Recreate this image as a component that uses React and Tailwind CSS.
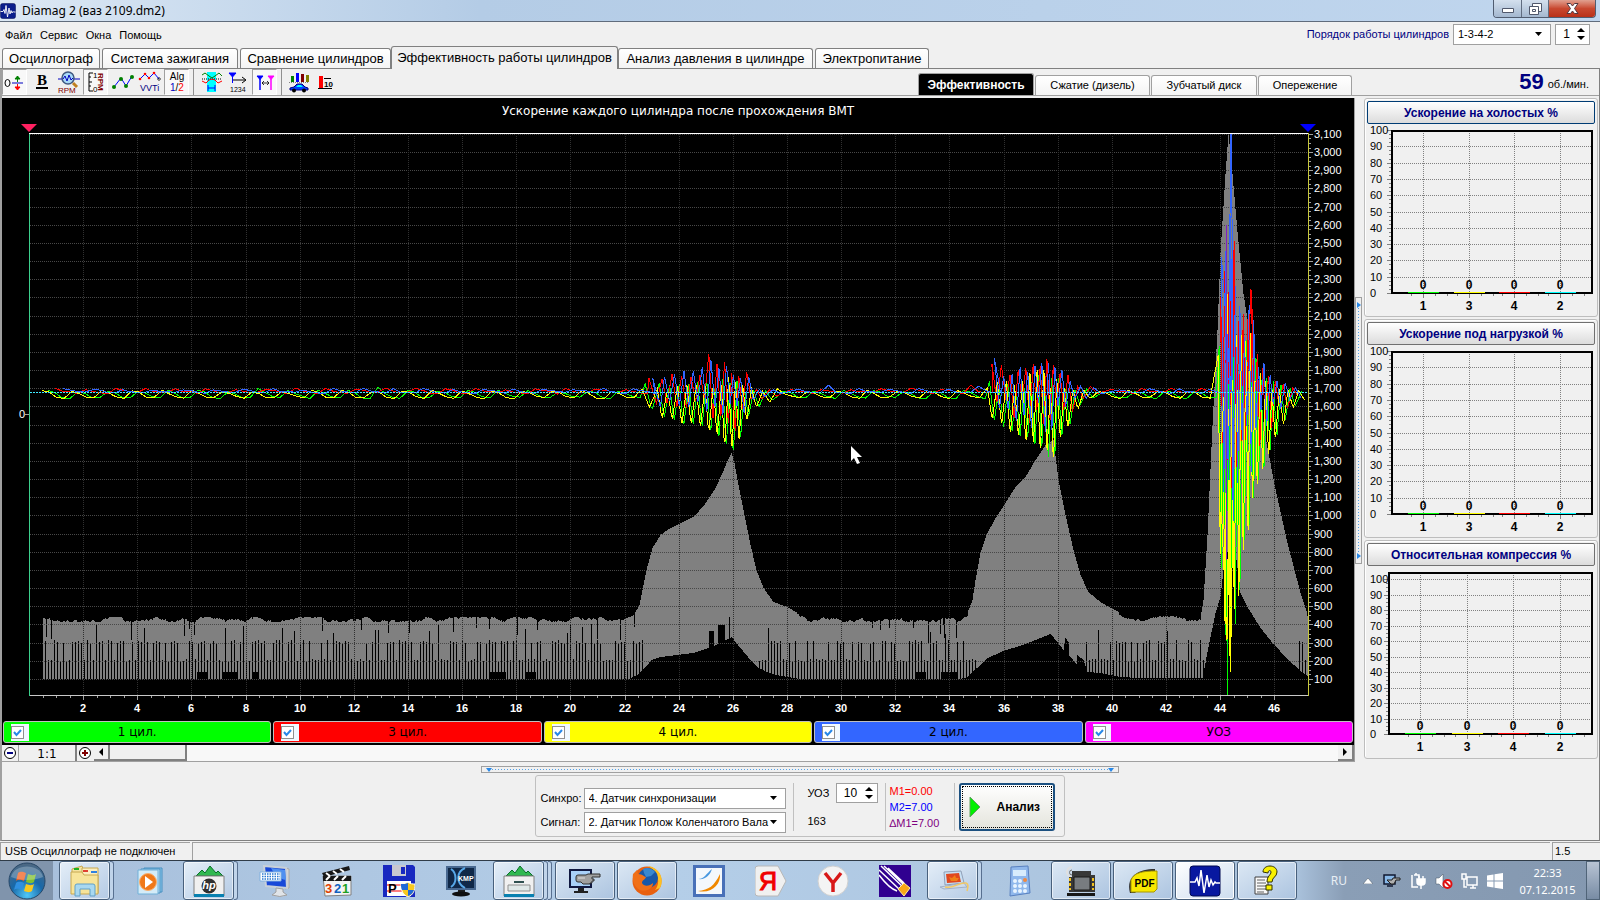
import React from "react";

/* ---------- trace data ---------- */

function makeRandom(seed) {
  let s = seed;
  return () => {
    s = (s * 1664525 + 1013904223) % 4294967296;
    return s / 4294967296;
  };
}

function lerp(points, x) {
  if (x <= points[0][0]) return points[0][1];
  for (let i = 1; i < points.length; i++) {
    const [x1, y1] = points[i];
    if (x <= x1) {
      const [x0, y0] = points[i - 1];
      return y0 + ((y1 - y0) * (x - x0)) / (x1 - x0);
    }
  }
  return points[points.length - 1][1];
}

const RPM_TOP = [
  [43, 619], [628, 619], [635, 612], [639, 605], [642, 590], [646, 570], [652, 548], [660, 535], [667, 530],
  [680, 523], [693, 517], [703, 506], [714, 490], [722, 473], [727, 461], [731, 453], [734, 463], [738, 485],
  [744, 515], [750, 545], [756, 570], [763, 588], [773, 602], [787, 607], [800, 615], [811, 619], [958, 619],
  [967, 613], [972, 600], [975, 580], [980, 553], [986, 535], [995, 518], [1005, 503], [1015, 487], [1025, 477],
  [1035, 460], [1045, 445], [1053, 440], [1058, 480], [1065, 515], [1073, 550], [1080, 575], [1088, 592],
  [1100, 602], [1112, 609], [1125, 615], [1136, 618], [1200, 618], [1203, 600], [1207, 535], [1212, 425],
  [1217, 330], [1220, 253], [1225, 174], [1228, 134], [1232, 174], [1237, 232], [1243, 294], [1252, 352],
  [1267, 448], [1275, 489], [1287, 543], [1300, 593], [1308, 617],
];

const RPM_BOTTOM = [
  [43, 679], [628, 679], [637, 675], [645, 667], [651, 660], [660, 657], [693, 653], [708, 648], [720, 643],
  [731, 637], [740, 648], [750, 660], [757, 667], [766, 672], [776, 675], [800, 679], [960, 679], [967, 677],
  [973, 671], [980, 665], [987, 658], [1003, 651], [1025, 644], [1040, 638], [1050, 634], [1057, 642],
  [1063, 650], [1065, 638], [1068, 642], [1069, 656], [1076, 664], [1077, 655], [1083, 660], [1087, 672],
  [1100, 673], [1120, 677], [1140, 678], [1202, 678], [1208, 647], [1215, 613], [1220, 597], [1224, 560],
  [1233, 535], [1240, 593], [1247, 607], [1260, 628], [1273, 644], [1287, 659], [1300, 671], [1307, 676],
];

const DARK_BLOCKS = [
  [197, 207, 672], [222, 237, 672], [252, 257, 672], [490, 505, 672], [525, 535, 672], [709, 713, 631],
  [718, 724, 625], [729, 729, 617], [916, 925, 672], [941, 956, 672],
];

function rpmPath() {
  const rnd = makeRandom(77);
  let d = "";
  let wander = 0;
  let slit = 660;
  for (let x = 43; x <= 1307; x++) {
    let top = lerp(RPM_TOP, x);
    let bottom = lerp(RPM_BOTTOM, x);
    const idle = top > 612;
    const nearIdle = bottom > 668;
    if (idle) {
      wander = Math.max(-2, Math.min(3, wander + (rnd() - 0.5) * 2.8));
      top += wander;
      if (rnd() < 0.025) top += 6 + rnd() * 16;
    }
    if (nearIdle && x % 3 === 0) {
      const r = rnd();
      if (r < 0.5) slit = 659 + rnd() * 2;
      else if (r < 0.96) slit = 640 + rnd() * 3;
      else slit = 624 + rnd() * 10;
      bottom = slit;
    }
    for (const [a, b, y] of DARK_BLOCKS) {
      if (x >= a && x <= b) bottom = Math.min(bottom, y);
    }
    d += `M${x}.5 ${Math.round(top)}V${Math.round(bottom)}`;
  }
  return d;
}

const SWING_UP = [
  [45, 388], [625, 388], [636, 382], [645, 372], [675, 372], [700, 370], [709, 346], [714, 366], [721, 360],
  [727, 356], [737, 372], [748, 370], [755, 389], [965, 388], [980, 376], [997, 354], [1004, 372], [1025, 365],
  [1034, 352], [1045, 354], [1055, 365], [1064, 364], [1072, 386], [1190, 388], [1200, 378], [1205, 364],
  [1210, 338], [1216, 280], [1222, 240], [1226, 220], [1229, 190], [1231, 134], [1233, 200], [1237, 280],
  [1245, 310], [1251, 284], [1258, 355], [1264, 362], [1275, 376], [1285, 382], [1300, 390],
];

const SWING_DOWN = [
  [45, 398], [630, 398], [650, 407], [660, 418], [673, 420], [685, 425], [697, 425], [707, 430], [719, 440],
  [728, 448], [735, 455], [744, 430], [752, 408], [762, 407], [775, 399], [965, 398], [975, 402], [985, 413],
  [996, 422], [1008, 430], [1018, 437], [1028, 441], [1037, 447], [1045, 453], [1053, 462], [1060, 441],
  [1064, 438], [1073, 420], [1080, 405], [1092, 398], [1200, 399], [1208, 408], [1211, 427], [1218, 500],
  [1223, 615], [1227, 657], [1230, 672], [1234, 632], [1240, 593], [1244, 558], [1250, 520], [1257, 490],
  [1265, 468], [1272, 447], [1282, 428], [1290, 410], [1300, 402],
];

function cylinderPath(offset, seed, downward) {
  const rnd = makeRandom(seed);
  const pts = [];
  const add = (px, y) => {
    if (px < 1305) pts.push(`${px.toFixed(1)} ${y.toFixed(1)}`);
  };
  let x = 42;
  while (x < 1304) {
    const rpm = 100 + (679 - lerp(RPM_TOP, x)) / 0.1817;
    const quiet = lerp(SWING_DOWN, x) - lerp(SWING_UP, x) < 13;
    if (quiet) {
      const period = 30;
      const high = downward ? 390 : 388;
      const low = downward ? 398 : 393;
      const a = x + offset * period;
      add(a, high + rnd() * 2 - (rnd() < 0.05 ? 3 : 0));
      add(a + 7, high + 2 + rnd() * 2);
      add(a + 14, low - rnd() * 2);
      add(a + 22, low - 1 + rnd() * 2);
      x += period;
    } else {
      const period = Math.max(4.6, 9000 / rpm);
      const a = x + offset * period;
      const b = a + period * 0.5;
      const up = 392 - lerp(SWING_UP, a);
      const down = lerp(SWING_DOWN, b) - 392;
      if (downward) {
        add(a, 392 - up * (0.1 + rnd() * 0.5));
        add(b - period * 0.12, 392 + down * (0.75 + rnd() * 0.15));
        add(b, 392 + down * (0.9 + rnd() * 0.1));
      } else {
        add(a, 392 - up * (0.65 + rnd() * 0.35));
        add(b, 392 + Math.min(down, 200) * (0.15 + rnd() * 0.55));
      }
      x += period;
    }
  }
  return "M" + pts.join("L");
}

const RPM = rpmPath();
const TRACES = [
  { color: "#00ff00", d: cylinderPath(0.2, 11, true) },
  { color: "#ff0000", d: cylinderPath(0.45, 23, false) },
  { color: "#ffff00", d: cylinderPath(0, 47, true) },
  { color: "#3366ff", d: cylinderPath(0.7, 31, false) },
];

/* ---------- main chart ---------- */

const xAt = (v) => Math.round(29 + v * 27.07);
const yAt = (v) => Math.round(679 - ((v - 100) / 100) * 18.17);

function MainChart() {
  const xs = Array.from({ length: 23 }, (_, i) => (i + 1) * 2);
  const ys = Array.from({ length: 31 }, (_, i) => (i + 1) * 100);
  const minorX = Array.from({ length: 92 }, (_, i) => 0.5 + i * 0.5);
  const minorY = Array.from({ length: 122 }, (_, i) => 75 + i * 25);
  return (
    <svg viewBox="2 98 1352 623" className="block h-auto w-full bg-black" role="img" aria-label="Ускорение каждого цилиндра после прохождения ВМТ">
      <text x="678" y="115" fill="#fff" fontSize="12" textAnchor="middle" className="font-['DejaVu_Sans',sans-serif]">
        Ускорение каждого цилиндра после прохождения ВМТ
      </text>
      <g shapeRendering="crispEdges">
        <path d={RPM} stroke="#808080" strokeWidth="1" />
        <g stroke="#484848" strokeDasharray="1 1">
          {ys.map((v) => <path key={v} d={`M30 ${yAt(v)}.5H1308`} />)}
          {xs.map((v) => <path key={v} d={`M${xAt(v)}.5 134V695`} stroke="#303030" />)}
        </g>
        <path d="M29 695.5H1309" stroke="#c8c8c8" />
        <g stroke="#a0a0a0">
          {minorX.map((v) => <path key={v} d={`M${xAt(v)}.5 696v2`} />)}
          {xs.map((v) => <path key={v} d={`M${xAt(v)}.5 696v4`} />)}
          {minorY.map((v) => <path key={v} d={`M1309 ${yAt(v)}.5h2`} />)}
          {ys.map((v) => <path key={v} d={`M1309 ${yAt(v)}.5h4`} />)}
          <path d="M25 414.5h4" />
        </g>
        <path d="M1227.5 600V695" stroke="#00ff00" />
      </g>
      <g fill="none" strokeWidth="1" shapeRendering="crispEdges">
        {TRACES.map((t) => <path key={t.color} d={t.d} stroke={t.color} />)}
        <path d="M1229 380L1230.5 134L1231.5 134L1233 380" stroke="#3366ff" />
        <path d="M1226.500 225V560" stroke="#8020c0" />
        <path d="M1247 392L1251 289L1254 392" stroke="#ff0000" />
        <path d="M1221 500L1227 640L1229 480L1230.500 672L1233 500" stroke="#ffff00" />
      </g>
      <path d="M30 392.5H1308" stroke="#40e8ff" strokeDasharray="2 1" shapeRendering="crispEdges" />
      <g shapeRendering="crispEdges">
        <path d="M29 133.5H1308" stroke="#fff" />
        <path d="M29.5 134V696" stroke="#3cd08c" />
        <path d="M1308.5 133V696" stroke="#c8c83c" />
      </g>
      <path d="M21 124h16l-8 8z" fill="#ff2060" />
      <path d="M1300 124h16l-8 8z" fill="#0000ff" />
      <g fill="#fff" fontSize="11" className="font-['Liberation_Sans',Arial,sans-serif]">
        {xs.map((v) => <text key={v} x={xAt(v)} y="712" textAnchor="middle" fontWeight="700">{v}</text>)}
        {ys.map((v) => <text key={v} x="1314" y={yAt(v) + 4}>{v.toLocaleString("en-US")}</text>)}
        <text x="19" y="418">0</text>
      </g>
      <path d="M851 446v15l3-3 3 6 3-1-3-6h5z" fill="#fff" />
    </svg>
  );
}

/* ---------- bar panels ---------- */

const BARS = [
  { label: "1", color: "#00ff00" },
  { label: "3", color: "#ffff00" },
  { label: "4", color: "#ff0000" },
  { label: "2", color: "#00ffff" },
];

function BarPanel({ title, left, top, zero, hundred, focused }) {
  const step = (zero - hundred) / 10;
  const centers = left === 25 ? [56, 102, 147, 193] : [53, 100, 146, 193];
  const right = 225;
  return (
    <section className="flex h-[219px] flex-col rounded-[3px] border border-[#bdbdbd] p-0.5 shadow-[inset_1px_1px_0_#fff]">
      <button
        className={
          "h-[23px] shrink-0 rounded-[2px] border bg-linear-to-b from-white to-[#dcdcdc] font-['Liberation_Sans',Arial,sans-serif] text-xs font-bold text-[#000080] " +
          (focused ? "border-[#003c74]" : "border-[#707070]")
        }
      >
        {title}
      </button>
      <svg viewBox="0 0 228 190" className="block h-auto w-full" role="img" aria-label={title}>
        <g shapeRendering="crispEdges" fill="none">
          <g stroke="#808080" strokeDasharray="1 1">
            {Array.from({ length: 10 }, (_, i) => (
              <path key={i} d={`M${left} ${Math.round(zero - step * (i + 1))}.5H${right}`} />
            ))}
            {centers.map((c) => <path key={c} d={`M${c}.5 ${top}V${zero}`} />)}
          </g>
          <path d={`M${left} ${top}H${right}V${zero}H${left}Z`} stroke="#000" strokeWidth="2" />
          <g stroke="#808080">
            {Array.from({ length: 11 }, (_, i) => <path key={i} d={`M${left - 5} ${Math.round(zero - step * i)}.5h4`} />)}
            {Array.from({ length: 41 }, (_, i) => <path key={i} d={`M${left - 3} ${Math.round(zero - (step * i) / 4)}.5h2`} />)}
            {centers.map((c) => (
              <path key={c} d={`M${c}.5 ${zero + 1}v4M${c - 12}.5 ${zero + 1}v2M${c + 12}.5 ${zero + 1}v2M${c + 24}.5 ${zero + 1}v2`} />
            ))}
          </g>
          {BARS.map((b, i) => <path key={b.label} d={`M${centers[i] - 15} ${zero - 1}.5h31`} stroke={b.color} />)}
        </g>
        <g className="font-['Liberation_Sans',Arial,sans-serif]" fill="#000">
          {Array.from({ length: 11 }, (_, i) => (
            <text key={i} x="3" y={Math.round(zero - step * i) + 4} fontSize="11">{i * 10}</text>
          ))}
          {BARS.map((b, i) => (
            <g key={b.label} fontSize="12" fontWeight="700" textAnchor="middle">
              <text x={centers[i]} y={zero - 4}>0</text>
              <text x={centers[i]} y={zero + 17}>{b.label}</text>
            </g>
          ))}
        </g>
      </svg>
    </section>
  );
}

/* ---------- toolbar ---------- */

const mono = "font-['Liberation_Sans',Arial,sans-serif]";

const TOOL_ICONS = {
  zero: (
    <>
      <ellipse cx="4.500" cy="13" rx="2.500" ry="3.500" fill="none" stroke="#000" />
      <path d="M9 13h11" stroke="#0000c0" />
      <path d="M14.500 6v6M12 9l2.500-3L17 9z" stroke="#008000" fill="#008000" />
      <path d="M14.500 14v5M12 17l2.500 3 2.500-3z" stroke="#f00" fill="#f00" />
    </>
  ),
  bold: (
    <>
      <text x="12" y="15" textAnchor="middle" fontSize="15" fontWeight="700" className="font-['Liberation_Serif',serif]">B</text>
      <path d="M6 17h12v2H6z" />
    </>
  ),
  rpm: (
    <>
      <path d="M1 9h22" stroke="#0000c0" />
      <circle cx="11" cy="8" r="6" fill="#a8d8f8" stroke="#405880" strokeWidth="1.500" />
      <path d="M6 9l2-3 2 5 2-6 2 5 2-2" stroke="#0000c0" fill="none" />
      <path d="M16 13l4 4" stroke="#c08020" strokeWidth="3" />
      <text x="1" y="23" fontSize="8" fill="#800000" className={mono}>RPM</text>
    </>
  ),
  scale: (
    <>
      <path d="M9 3H5v18h4M5 12h3M5 7h2M5 16h2" stroke="#000" fill="none" />
      <text x="9" y="8" fontSize="8" className={mono}>1</text>
      <text x="9" y="22" fontSize="8" className={mono}>0</text>
      <text transform="translate(14 3) rotate(90)" fontSize="8" fill="#800000" fontWeight="700" className={mono}>RPM</text>
    </>
  ),
  graph: (
    <>
      <path d="M3 17L10 8l5 8 6-10" stroke="#00f" fill="none" />
      <g fill="#008000"><circle cx="3" cy="17" r="2" /><circle cx="10" cy="9" r="2" /><circle cx="15" cy="16" r="2" /><circle cx="21" cy="7" r="2" /></g>
    </>
  ),
  vvti: (
    <>
      <path d="M2 9l5-5 4 4 5-5 5 6" stroke="#00f" fill="none" />
      <g fill="#f00"><circle cx="2" cy="9" r="1.300" /><circle cx="7" cy="4" r="1.300" /><circle cx="11" cy="8" r="1.300" /><circle cx="16" cy="3" r="1.300" /></g>
      <circle cx="21" cy="9" r="1.300" fill="none" stroke="#000" strokeWidth=".7" />
      <text x="2" y="21" fontSize="9" fill="#000080" className={mono}>VVTi</text>
    </>
  ),
  alg: (
    <>
      <text x="12" y="10" textAnchor="middle" fontSize="10" className={mono}>Alg</text>
      <text x="5" y="21" fontSize="10" fill="#0000c0" className={mono}>1<tspan fill="#000">/</tspan><tspan fill="#f00">2</tspan></text>
    </>
  ),
  phase: (
    <>
      <path d="M8 2h9v20H8z" fill="#0ff" />
      <path d="M3 5l3-2 4 3 3 2 3-2 4-3 3 3" stroke="#008000" fill="none" />
      <path d="M3 9h19" stroke="#000" strokeDasharray="1 1" />
      <path d="M3 11l4 2 3-3 3-1 3 1 3 3 4-2" stroke="#f00" fill="none" />
      <path d="M9 15v6M16 15v6M9 18h7" stroke="#00f" />
    </>
  ),
  mark: (
    <>
      <path d="M3 3h7L6.500 7z" fill="#00f" stroke="#00f" />
      <path d="M6.500 7v6" stroke="#00f" />
      <path d="M7 10h12M16 7l4 3-4 3" stroke="#000" fill="none" />
      <text x="4" y="22" fontSize="7" className={mono}>1234</text>
    </>
  ),
  markers: (
    <>
      <path d="M4 6h6L7 9.500z" fill="#00f" stroke="#00f" />
      <path d="M7 9v11" stroke="#00f" strokeWidth="1.500" />
      <path d="M15 6h6l-3 3.500z" fill="#f0f" stroke="#f0f" />
      <path d="M18 9v11" stroke="#f0f" strokeWidth="1.500" />
      <path d="M9 13h7M11 11l-2 2 2 2M14 11l2 2-2 2" stroke="#000" fill="none" strokeWidth=".8" />
    </>
  ),
  car: (
    <>
      <path d="M4 6h3v6H4z" fill="#008000" /><path d="M9 3h3v9H9z" fill="#00f" /><path d="M14 4h3v8h-3z" fill="#800000" /><path d="M19 5h3v7h-3z" fill="#808000" />
      <path d="M2 12.500h20" stroke="#808080" strokeDasharray="1 1" />
      <path d="M3 20v-2l4-1 3-3h5l3 3 3 1v2z" fill="#0040ff" stroke="#000080" />
      <path d="M9 17l2-2h3l2 2z" fill="#0ff" />
      <circle cx="7" cy="20.500" r="2" fill="#000" /><circle cx="17" cy="20.500" r="2" fill="#000" />
    </>
  ),
  ten: (
    <>
      <path d="M5 6h4v12H5z" fill="#f00" />
      <path d="M4 18.500h14M10 8.500h7" stroke="#000" />
      <text x="10" y="17" fontSize="8" fontWeight="700" className={mono}>10</text>
    </>
  ),
};

const TOOL_GROUPS = [
  [["zero", "Ноль", true], ["bold", "Толщина"], ["rpm", "Обороты"], ["scale", "Шкала оборотов", true], ["graph", "Точки"], ["vvti", "VVTi"], ["alg", "Алгоритм", true]],
  [["phase", "Фаза"], ["mark", "Метки"], ["markers", "Маркеры", true]],
  [["car", "Отчёт"], ["ten", "Среднее"]],
];

function Toolbar() {
  return (
    <div className="flex items-center">
      {TOOL_GROUPS.map((group, g) => (
        <div key={g} className={"flex gap-0.5 " + (g ? "ml-1 border-l border-[#909090] pl-1" : "")}>
          {group.map(([name, label, pressed]) => (
            <button
              key={name}
              aria-label={label}
              aria-pressed={!!pressed}
              className={"flex h-[26px] w-[25px] items-center justify-center border " + (pressed ? "border-[#a0a0a0] border-r-white border-b-white bg-[#f8f8f8]" : "border-transparent")}
            >
              <svg viewBox="0 0 24 24" className="size-6 shrink-0">{TOOL_ICONS[name]}</svg>
            </button>
          ))}
        </div>
      ))}
    </div>
  );
}

/* ---------- small controls ---------- */

function Combo({ id, value, className }) {
  return (
    <div className={"flex items-center border border-[#a0a0a0] bg-white pr-2 " + className}>
      <select id={id} className="h-full min-w-0 flex-1 appearance-none overflow-hidden bg-white pl-1 font-['Liberation_Sans',Arial,sans-serif] text-[11px] whitespace-pre">
        <option>{value}</option>
      </select>
      <svg viewBox="0 0 7 4" className="h-1 w-[7px] shrink-0"><path d="M0 0h7L3.500 4z" /></svg>
    </div>
  );
}

function Spin({ id, value, label, className }) {
  return (
    <div className={"flex items-center border border-[#a0a0a0] bg-white pr-1 " + className}>
      <input id={id} aria-label={label} defaultValue={value} className="h-full min-w-0 flex-1 bg-white text-center font-['Liberation_Sans',Arial,sans-serif] text-xs outline-none" />
      <div className="flex flex-col gap-1">
        <button aria-label="Больше"><svg viewBox="0 0 8 4" className="block h-1 w-2"><path d="M0 4h8L4 0z" /></svg></button>
        <button aria-label="Меньше"><svg viewBox="0 0 8 4" className="block h-1 w-2"><path d="M0 0h8L4 4z" /></svg></button>
      </div>
    </div>
  );
}

function WaveLogo({ className }) {
  return (
    <svg viewBox="0 0 32 32" className={className}>
      <rect x="1" y="1" width="30" height="30" rx="4" fill="#0a1e8c" stroke="#000850" />
      <path d="M1 17h5l2-4 2 8 2-16 3 23 3-18 2 12 2-7 2 5 2-3 1 1h4" fill="none" stroke="#fff" strokeWidth="1.800" />
    </svg>
  );
}

/* ---------- taskbar ---------- */

const TASK_ICONS = {
  folder: (
    <>
      <path d="M3 4l10-3 1 3h14v5H3z" fill="#f4e2a0" stroke="#c8a850" /><path d="M13 3h16v25H13z" fill="#fbeec0" stroke="#c8a850" />
      <path d="M2 7h11l2 3h14v19H2z" fill="#f7e49a" stroke="#c8a850" />
      <path d="M5 3h5v2H5z" fill="#20b020" /><path d="M14 5h5v2h-5z" fill="#e04030" /><path d="M22 6h6v2h-6z" fill="#3080e0" />
      <path d="M6 31V21q0-2 2-2h16q2 0 2 2v10h-5v-7H11v7z" fill="#a8d8f0" stroke="#60a0c8" />
    </>
  ),
  player: (
    <>
      <path d="M9 3h18v24H9z" fill="#8cc8ec" stroke="#4890c0" /><path d="M6 4h19v24H6z" fill="#b4dcf4" stroke="#4890c0" /><path d="M3 5h20v24H3z" fill="#d4ecf8" stroke="#70b0d8" />
      <circle cx="13" cy="17" r="8.500" fill="#f07818" stroke="#f8b070" /><path d="M10 11l8 6-8 6z" fill="#fff" />
    </>
  ),
  hp: (
    <>
      <path d="M3 11l6-6 3 3 5-7 6 7 2-2 5 5z" fill="#30b850" stroke="#087028" />
      <path d="M1 11h30v20H1z" fill="#f0f0f0" stroke="#808080" /><path d="M1 29h30v3H1z" fill="#0880b0" />
      <circle cx="16" cy="21" r="7.500" fill="#303030" />
      <text x="16" y="24" textAnchor="middle" fontSize="11" fontStyle="italic" fontWeight="700" fill="#fff" className={mono}>hp</text>
    </>
  ),
  keyboard: (
    <>
      <path d="M26 3l4 1 0 19-4 1z" fill="#d8d8d8" stroke="#a8a8a8" />
      <path d="M5 1l22 2 1 20-21-2z" fill="#1848d8" stroke="#c8d0d8" strokeWidth="2" /><path d="M12 3l14 2 1 10C20 14 15 9 12 3z" fill="#5090f0" />
      <path d="M17 23l7 1 0 3 4 3q-7 3-15 0l4-3z" fill="#e0e4e8" stroke="#a0a0a0" />
      <path d="M1 7h21v9H1z" fill="#fff" stroke="#80b0e0" /><path d="M3 9h18M3 11.500h18M3 14h18" stroke="#2878d0" strokeWidth="1.500" strokeDasharray="1.500 1" />
    </>
  ),
  clapper: (
    <>
      <path d="M2 11h28v19l-26 1z" fill="#f4f4f4" stroke="#808080" /><path d="M2 11h28v5H2zM1 8l27-7 1 4L3 12z" fill="#181818" />
      <path d="M5 8l4 3M12 6l4 3M19 4l4 3M5 15l4-4M13 15l4-4M21 15l4-4" stroke="#fff" strokeWidth="2" />
      <g fontSize="13" fontWeight="700" className={mono}><text x="4" y="28" fill="#e04000">3</text><text x="13" y="28" fill="#1060c0">2</text><text x="21" y="28" fill="#20a020">1</text></g>
    </>
  ),
  floppy: (
    <>
      <path d="M0 0h30l2 2v30H0z" fill="#1828c0" /><path d="M9 0h14v11H9z" fill="#c8c8d0" /><path d="M18 2h4v7h-4z" fill="#1828c0" />
      <path d="M4 16h24v15H4z" fill="#fff" /><path d="M4 20h24M4 26h24" stroke="#f00" />
      <text x="5" y="28" fontSize="13" fontWeight="700" className={mono}>P</text>
      <path d="M25 17c2 2 5 2 7 2 0 7-2 11-7 13-5-2-7-6-7-13 3 0 5-1 7-2z" fill="#f8c820" stroke="#fff" /><path d="M25 18v7h-6c-1-2-1-4-1-6 3 0 5 0 7-1zM25 25h6c-1 3-3 5-6 6z" fill="#2068d8" />
    </>
  ),
  kmp: (
    <>
      <path d="M2 2h28v22H2z" fill="#102848" stroke="#486890" strokeWidth="2" /><path d="M6 4c6 4 6 14 0 18M20 3c-9 4-9 15 0 20" stroke="#58a8e8" strokeWidth="2" fill="none" />
      <text x="13" y="16" fontSize="7" fontWeight="700" fill="#fff" className={mono}>KMP</text>
      <path d="M13 25h7v2h-7z" fill="#202020" /><ellipse cx="16" cy="29" rx="9" ry="2.500" fill="#101010" />
    </>
  ),
  scanner: (
    <>
      <path d="M3 11l6-6 3 3 5-7 6 7 2-2 5 5z" fill="#30b850" stroke="#087028" />
      <path d="M1 11h30v20H1z" fill="#f0f0f0" stroke="#808080" /><path d="M1 29h30v3H1z" fill="#0880b0" />
      <path d="M5 20h22v6H5z" fill="#e0e8e8" stroke="#909090" /><path d="M11 17h10" stroke="#305050" strokeWidth="2" />
    </>
  ),
  hand: (
    <>
      <path d="M1 5h21v17H1z" fill="#a8d0f8" stroke="#101840" strokeWidth="2" /><path d="M9 23h6v3h4v2H5v-2h4z" fill="#202020" />
      <path d="M7 12q0-2 2-2h8l2-1h12v3h-8v2h2v2h-2v2h-2v1h-7l-2-2H9q-2 0-2-2z" fill="#a0a0a0" stroke="#303030" />
      <path d="M9 13h7" stroke="#e0e0e0" />
    </>
  ),
  firefox: (
    <>
      <circle cx="16" cy="16" r="14.500" fill="#e86010" /><path d="M17 1a15 15 0 0 1 12 22l-5 2c5-6 5-17-7-24z" fill="#ffc020" />
      <circle cx="17" cy="13" r="10" fill="#1858a8" /><path d="M12 4c4-2 9-1 12 3l-4 4-5 1-2-4z" fill="#3888d0" />
      <path d="M2 9l4-4 1 4c5 0 6 3 8 3-1 3-4 3-4 6 2 4 8 3 11 0 0 6-7 9-13 7C3 22 1 15 2 9z" fill="#f07018" />
    </>
  ),
  swoosh: (
    <>
      <path d="M1.500 1.500h29v29h-29z" fill="#f4f8fc" stroke="#4870b8" strokeWidth="3" />
      <path d="M5 14c6 0 8-5 14-10-2 6-6 11-14 10z" fill="#4898e0" /><path d="M5 26c11-1 16-5 22-17 1 10-8 20-22 17z" fill="#f08800" />
    </>
  ),
  yandex: (
    <>
      <path d="M3 1h20l8 15-8 15H3q-3 0-3-3V4q0-3 3-3z" fill="#f0f0f0" stroke="#b8b8b8" />
      <text x="13" y="25" textAnchor="middle" fontSize="25" fill="#f00000" stroke="#f00000" strokeWidth="1" className={mono}>Я</text>
    </>
  ),
  browser: (
    <>
      <circle cx="16" cy="16" r="15" fill="#f4f4f4" stroke="#d0d0d0" /><path d="M8 8l8 10 8-10M16 17v10" fill="none" stroke="#d81818" strokeWidth="3.500" />
    </>
  ),
  pencil: (
    <>
      <path d="M0 0h32v32H0z" fill="#300090" />
      <path d="M2 1l23 22M5 1l20 19M0 5l20 19M0 10c6 8 12 14 18 16M9 3l16 15" stroke="#fff" strokeWidth="1.500" fill="none" />
      <path d="M19 24l6-6 6 5-6 8z" fill="#f8a818" stroke="#fff0a0" />
    </>
  ),
  paint: (
    <>
      <path d="M7 7l17-1 3 12-19 2z" fill="#c8e0f4" stroke="#90a0b8" /><path d="M9 9l13-1 2 9-14 1z" fill="#e04820" /><path d="M12 12l3 1 3-3 1 3 3 0-2 3h-6z" fill="#f08018" />
      <path d="M3 22l24-4 3 4-23 2z" fill="#d0dce8" stroke="#a0b0c8" /><path d="M8 22c9 2 13-5 21-4 3 1 2 4 1 8" fill="none" stroke="#f0c868" strokeWidth="1.500" />
    </>
  ),
  calc: (
    <>
      <path d="M8 2l17-1 2 27-20 3z" fill="#90b8ec" stroke="#5880c0" /><path d="M10 5h13v6H10z" fill="#d8ecfc" />
      <g fill="#e8f4ff"><circle cx="12" cy="16" r="2" /><circle cx="17" cy="16" r="2" /><circle cx="12" cy="21" r="2" /><circle cx="17" cy="21" r="2" /><circle cx="22" cy="21" r="2" /><circle cx="12" cy="26" r="2" /><circle cx="17" cy="26" r="2" /><circle cx="22" cy="26" r="2" /></g><circle cx="22" cy="15" r="2" fill="#f08840" />
    </>
  ),
  engine: (
    <>
      <path d="M7 2a5 5 0 1 0 0 10" fill="none" stroke="#e0e0e0" strokeWidth="2" /><path d="M7 5a2 2 0 1 0 0 5" fill="none" stroke="#707070" />
      <path d="M7 6h19v4h4v17H4V12h3z" fill="#383838" /><path d="M9 12h16v13H9z" fill="#787c80" stroke="#181818" />
      <path d="M5 13v12M28 13v12" stroke="#f0c020" strokeWidth="2" strokeDasharray="3 2" />
      <path d="M2 28h28v3H2z" fill="#181818" />
    </>
  ),
  pdf: (
    <>
      <path d="M3 28C-1 14 8 4 28 4v5L8 28z" fill="#303030" /><path d="M4 15c3-7 10-9 26-9v18l-3 3H4z" fill="#f8e800" stroke="#a89800" />
      <text x="17.500" y="22" textAnchor="middle" fontSize="10" fontWeight="700" className={mono}>PDF</text>
    </>
  ),
  diamag: (
    <>
      <rect x="1" y="1" width="30" height="30" rx="3" fill="#0818a0" stroke="#000850" />
      <path d="M1 17h5l2-4 2 8 2-16 3 23 3-18 2 12 2-7 2 5 2-3 1 1h4" fill="none" stroke="#fff" strokeWidth="1.500" />
    </>
  ),
  help: (
    <>
      <path d="M4 12h13v17H4z" fill="#f8f8f8" stroke="#404040" /><path d="M6 15h8M6 18h9M6 21h9M6 24h9M6 27h7" stroke="#606060" />
      <path d="M12 7c0-8 14-8 14 0 0 5-5 5-5 10h-5c0-6 4-7 4-10 0-2-3-2-3 1zM15 20h6v5h-6z" fill="#f8f000" stroke="#303000" />
    </>
  ),
};

const TASKS = [
  ["folder", "Проводник", "stack"], ["player", "Проигрыватель"], ["hp", "HP", "stack"], ["keyboard", "Экранная клавиатура"],
  ["clapper", "Media Player Classic"], ["floppy", "Дискета"], ["kmp", "KMPlayer"], ["scanner", "Сканер", "stack2"],
  ["hand", "Удалённый доступ", "open"], ["firefox", "Firefox", "open"], ["swoosh", "Просмотр"], ["yandex", "Яндекс"],
  ["browser", "Яндекс.Браузер"], ["pencil", "Редактор"], ["paint", "Изображения", "stack"], ["calc", "Калькулятор"],
  ["engine", "Двигатель", "open"], ["pdf", "PDF", "open"], ["diamag", "Diamag 2", "active"], ["help", "Справка", "open"],
];

function Taskbar() {
  return (
    <nav className="flex h-10 shrink-0 items-stretch overflow-hidden border-t border-[#303c48] bg-[#8498ae] font-['Noto_Sans',sans-serif]">
      <button aria-label="Пуск" className="flex w-[53px] shrink-0 items-center justify-center bg-[#8094ac]">
        <svg viewBox="0 0 38 38" className="size-[38px]">
          <defs><radialGradient id="orb" cx=".5" cy=".9" r=".9"><stop offset="0" stopColor="#50c8f8" /><stop offset=".5" stopColor="#1868a8" /><stop offset="1" stopColor="#506880" /></radialGradient></defs>
          <circle cx="19" cy="19" r="18" fill="url(#orb)" stroke="#284868" />
          <path d="M10 11c3-2 5-1 8 0l-2 8c-3-1-5-2-8 0z" fill="#f06020" /><path d="M20 12c3 1 5 2 8 0l-2 8c-3 2-5 1-8 0z" fill="#80c030" />
          <path d="M8 21c3-2 5-1 8 0l-2 7c-3-1-5-2-8 0z" fill="#3090e0" /><path d="M18 22c3 1 5 2 8 0l-2 7c-3 2-5 1-8 0z" fill="#f8c820" />
          <path d="M3 15C6 1 32 1 35 15 26 19 12 19 3 15z" fill="#fff" opacity=".25" />
        </svg>
      </button>
      <div className="flex shrink-0 bg-linear-to-r from-[#a8c0dc] via-[#b4cee8] to-[#a8c0da] pl-1.5">
        {TASKS.map(([icon, label, kind]) => (
          <div key={icon} className="flex w-[62px] shrink-0">
            <button
              aria-label={label}
              className={
                "flex items-center justify-center " +
                (kind === "stack" || kind === "stack2"
                  ? "w-[51px] rounded-[3px] border border-[#48607c] bg-linear-to-br from-[#e4eef8] to-[#b4cae4] shadow-[inset_0_0_0_1px_#ffffff90]"
                  : kind === "open"
                    ? "w-[60px] rounded-[3px] border border-[#48607c] bg-linear-to-br from-[#dce8f4] to-[#acc4e0] shadow-[inset_0_0_0_1px_#ffffff90]"
                    : kind === "active"
                      ? "w-[60px] rounded-[3px] border border-[#48607c] bg-linear-to-br from-white to-[#ccdcee] shadow-[inset_0_0_0_1px_#ffffff]"
                      : "w-[60px]")
              }
            >
              <svg viewBox="0 0 32 32" className="size-8 shrink-0">{TASK_ICONS[icon]}</svg>
            </button>
            {(kind === "stack" || kind === "stack2") && <span className="w-1 rounded-r-[3px] border-y border-r border-[#587090] bg-[#c0d4ea]" />}
            {kind === "stack2" && <span className="w-1 rounded-r-[3px] border-y border-r border-[#587090] bg-[#c0d4ea]" />}
          </div>
        ))}
      </div>
      <div className="flex flex-1 items-center justify-end bg-linear-to-r from-[#a8c0da] via-[#8a9eb6] via-15% to-[#8498b0] text-xs text-white">
        <span className="mr-4 text-[#e8eef4]">RU</span>
        <button aria-label="Скрытые значки" className="mr-2.5"><svg viewBox="0 0 10 6" className="h-1.5 w-2.5"><path d="M0 6h10L5 0z" fill="#fff" stroke="#405060" strokeWidth=".5" /></svg></button>
        <div className="mr-1.5 flex gap-2">
          <svg viewBox="0 0 18 16" className="h-4 w-[18px]"><path d="M1 2h11v9H1zM4 13h6" fill="#88b8e8" stroke="#101830" strokeWidth="1.500" /><path d="M4 7h5l1-2h7v2h-4l-2 4H8z" fill="#b0b0b0" stroke="#202020" /></svg>
          <svg viewBox="0 0 18 16" className="h-4 w-[18px]" fill="none" stroke="#fff" strokeWidth="1.500"><path d="M5 2h5v3M3 2v12h6M7 2V0" /><path d="M8 6h8v3q0 3-3 3h-2q-3 0-3-3zM10 6V3M14 6V3M12 12v4" fill="#fff" /></svg>
          <svg viewBox="0 0 18 16" className="h-4 w-[18px]"><path d="M1 5h3l4-4v14l-4-4H1z" fill="#fff" stroke="#405060" strokeWidth=".5" /><circle cx="12.500" cy="11" r="4" fill="#fff" stroke="#e01010" strokeWidth="2" /><path d="M9.500 8l6 6" stroke="#e01010" strokeWidth="2" /></svg>
          <svg viewBox="0 0 18 16" className="h-4 w-[18px]" fill="none" stroke="#fff" strokeWidth="1.500"><path d="M6 4h10v8H6zM9 15h6M12 12v3" /><path d="M1 1h4v5H1zM3 6v8h3" /></svg>
          <svg viewBox="0 0 16 16" className="size-4" fill="#fff"><path d="M0 2.500l6.500-1v6H0zM7.500 1.300L16 0v7.500H7.500zM0 8.500h6.500v6L0 13.500zM7.500 8.500H16V16l-8.500-1.300z" /></svg>
        </div>
        <time className="w-[77px] text-center text-[11px] leading-[17px]">22:33<br />07.12.2015</time>
        <button aria-label="Показать рабочий стол" className="h-full w-3.5 border border-[#506478] bg-linear-to-b from-[#b8c4d4] to-[#788ca4]" />
      </div>
    </nav>
  );
}

/* ---------- page ---------- */

const TABS = [
  ["Осциллограф", "w-[98px]"],
  ["Система зажигания", "w-[136px]"],
  ["Сравнение цилиндров", "w-[151px]"],
  ["Эффективность работы цилиндров", "w-[227px]"],
  ["Анализ давления в цилиндре", "w-[195px]"],
  ["Электропитание", "w-[114px]"],
];

const SUB_TABS = [
  ["Эффективность", "w-[116px]"],
  ["Сжатие (дизель)", "w-[115px]"],
  ["Зубчатый диск", "w-[106px]"],
  ["Опережение", "w-[94px]"],
];

const CHANNELS = [
  ["1 цил.", "bg-[#00ff00]"],
  ["3 цил.", "bg-[#ff0000]"],
  ["4 цил.", "bg-[#ffff00]"],
  ["2 цил.", "bg-[#3366ff]"],
  ["УОЗ", "bg-[#ff00ff]"],
];

export default function App() {
  return (
    <div className="flex min-h-screen flex-col bg-[#f0f0f0] font-['Liberation_Sans',Arial,sans-serif] text-[11px] text-black">
      <header className="flex h-[22px] items-start justify-between border-b border-[#606c7c] bg-linear-to-r from-[#dce8f4] via-[#b4cce6] via-30% to-[#c0d6ee]">
        <h1 className="flex h-[21px] items-center gap-1.5 font-['Noto_Sans',sans-serif] text-xs">
          <WaveLogo className="size-4" />
          Diamag 2 (ваз 2109.dm2)
        </h1>
        <div className="mr-1 flex h-[18px] overflow-hidden rounded-b-[4px] border border-t-0 border-[#505c70]">
          <button aria-label="Свернуть" className="flex w-7 items-center justify-center border-r border-[#606c80] bg-linear-to-b from-[#d4e0ee] to-[#a4b8d0]">
            <svg viewBox="0 0 12 5" className="mt-1 h-[5px] w-3"><path d="M.5.5h11v4H.5z" fill="#fff" stroke="#50586c" /></svg>
          </button>
          <button aria-label="Восстановить" className="flex w-[27px] items-center justify-center border-r border-[#606c80] bg-linear-to-b from-[#d4e0ee] to-[#a4b8d0]">
            <svg viewBox="0 0 13 12" className="h-3 w-[13px]" fill="#fff" stroke="#50586c"><path d="M3.500.5h9v8h-9z" /><path d="M.5 3.500h9v8h-9zM3.500 6.500h3v2h-3z" /></svg>
          </button>
          <button aria-label="Закрыть" className="flex w-[46px] items-center justify-center bg-linear-to-b from-[#e0a090] via-[#c84830] to-[#b83018]">
            <svg viewBox="0 0 13 11" className="h-[11px] w-[13px]"><path d="M1 .5h3.500l2 2.500 2-2.500H12L8.500 5.500l3.500 5H8.500l-2-2.500-2 2.500H1l3.500-5z" fill="#fff" stroke="#503840" /></svg>
          </button>
        </div>
      </header>

      <div className="flex h-6 items-center justify-between">
        <nav className="flex gap-2 pt-0.5 pl-[5px]">
          {["Файл", "Сервис", "Окна", "Помощь"].map((m) => <button key={m}>{m}</button>)}
        </nav>
        <div className="mr-2.5 flex items-center gap-1">
          <label htmlFor="order" className="text-[#000080]">Порядок работы цилиндров</label>
          <Combo id="order" value="1-3-4-2" className="h-[21px] w-[98px]" />
          <Spin label="Номер цилиндра" value="1" className="h-[21px] w-[35px]" />
        </div>
      </div>

      <div className="flex h-[23px] items-end border-b border-[#808080] pl-0.5 text-[13px]" role="tablist">
        {TABS.map(([t, w], i) => (
          <button
            key={t}
            role="tab"
            aria-selected={i === 3}
            className={
              w + " shrink-0 rounded-t-[3px] border border-b-0 border-[#808080] whitespace-nowrap " +
              (i === 3 ? "-mb-px h-[23px] bg-[#f0f0f0]" : "h-5 bg-linear-to-b from-white to-[#f4f4f4] " + (i < 2 || i === 4 ? "mr-0.5" : ""))
            }
          >
            {t}
          </button>
        ))}
      </div>

      <main className="flex flex-col border-r border-b border-l-2 border-[#808080] border-l-[#a0a0a0]">
        <div className="flex h-[27px] items-end border-b border-[#a0a0a0]">
          <Toolbar />
          <div className="ml-auto flex items-end gap-px" role="tablist">
            {SUB_TABS.map(([t, w], i) => (
              <button
                key={t}
                role="tab"
                aria-selected={i === 0}
                className={w + " rounded-t-[3px] border border-b-0 border-[#a0a0a0] whitespace-nowrap " + (i === 0 ? "h-[22px] bg-black text-xs font-bold text-white" : "h-5 bg-linear-to-b from-white to-[#f4f4f4]")}
              >
                {t}
              </button>
            ))}
          </div>
          <p className="flex w-[247px] items-center justify-end gap-1 self-center pr-2.5 text-[#000080]">
            <b className="text-[22px] leading-6">59</b>
            <span className="pt-1 text-black">об./мин.</span>
          </p>
        </div>

        <div className="mt-0.5 flex">
          <div className="flex min-w-0 flex-1 flex-col border-r border-b border-[#a0a0a0]">
            <MainChart />
            <div className="grid grid-cols-5 gap-0.5 bg-black px-px pb-0.5">
              {CHANNELS.map(([name, color]) => (
                <label key={name} className={"flex h-[22px] items-center rounded-[3px] border border-[#c0c0c0] pl-[7px] " + color}>
                  <span className="flex h-[17px] w-[18px] shrink-0 items-center bg-[#f0f8ff]">
                    <input
                      type="checkbox"
                      defaultChecked
                      className="size-[13px] appearance-none border border-[#909090] bg-white bg-[url('data:image/svg+xml,%3Csvg%20xmlns=%22http://www.w3.org/2000/svg%22%20viewBox=%220%200%2011%2011%22%3E%3Cpath%20d=%22M2%205l2.500%203L9%203%22%20fill=%22none%22%20stroke=%22%232888e8%22%20stroke-width=%222%22/%3E%3C/svg%3E')]"
                    />
                  </span>
                  <span className="flex-1 pr-[25px] text-center font-['DejaVu_Sans',sans-serif] text-xs">{name}</span>
                </label>
              ))}
            </div>
            <div className="flex h-4">
              <button aria-label="Уменьшить" className="w-[17px] border-r border-[#a0a0a0]"><svg viewBox="0 0 16 16" className="size-4"><circle cx="8" cy="8" r="5.500" fill="#fff" stroke="#000" /><path d="M5 8h6" stroke="#000080" strokeWidth="2" /></svg></button>
              <span className="w-[58px] border-r-2 border-[#808080] text-center font-['DejaVu_Sans',sans-serif] text-xs leading-[18px]">1:1</span>
              <button aria-label="Увеличить" className="w-[17px]"><svg viewBox="0 0 16 16" className="size-4"><circle cx="8" cy="8" r="5.500" fill="#fff" stroke="#000" /><path d="M5 8h6M8 5v6" stroke="#800000" strokeWidth="2" /></svg></button>
              <button aria-label="Влево" className="flex w-4 items-center justify-center border-r-2 border-b-2 border-[#808080]"><svg viewBox="0 0 4 8" className="h-2 w-1"><path d="M4 0v8L0 4z" /></svg></button>
              <div className="flex flex-1 bg-[#f8f8f8]"><div className="w-[77px] border-r-2 border-b-2 border-[#808080] bg-[#f0f0f0]" /></div>
              <button aria-label="Вправо" className="flex w-4 items-center justify-center border-r-2 border-b-2 border-[#808080]"><svg viewBox="0 0 4 8" className="h-2 w-1"><path d="M0 0v8l4-4z" /></svg></button>
            </div>
          </div>
          <div className="flex w-[7px] shrink-0 items-center">
            <div className="flex h-[267px] w-[7px] flex-col items-center justify-between border border-[#a0a0a0] py-1">
              <svg viewBox="0 0 4 6" className="h-1.5 w-1 shrink-0"><path d="M0 0v6l4-3z" fill="#2888e8" /></svg>
              <div className="w-px flex-1 bg-[repeating-linear-gradient(#50a0e8_0_1px,transparent_1px_3px)]" />
              <svg viewBox="0 0 4 6" className="h-1.5 w-1 shrink-0"><path d="M0 0v6l4-3z" fill="#2888e8" /></svg>
            </div>
          </div>
          <aside className="mr-px ml-0.5 flex w-[234px] shrink-0 flex-col gap-0.5">
            <BarPanel title="Ускорение на холостых %" left={25} top={7} zero={169} hundred={6} focused />
            <BarPanel title="Ускорение под нагрузкой %" left={25} top={7} zero={169} hundred={6} />
            <BarPanel title="Относительная компрессия %" left={22} top={7} zero={168} hundred={13} />
          </aside>
        </div>

        <div className="flex flex-col items-center gap-0.5 pt-1 pr-0.5 pb-[3px]">
          <div className="flex h-[7px] w-[638px] items-center justify-between border border-[#a0a0a0] px-1">
            <svg viewBox="0 0 6 4" className="h-1 w-1.5"><path d="M0 0h6L3 4z" fill="#2888e8" /></svg>
            <div className="h-px flex-1 bg-[repeating-linear-gradient(90deg,#50a0e8_0_1px,transparent_1px_3px)]" />
            <svg viewBox="0 0 6 4" className="h-1 w-1.5"><path d="M0 0h6L3 4z" fill="#2888e8" /></svg>
          </div>
          <div className="flex h-[62px] w-[530px] items-center rounded-[3px] border border-[#c0c0c0] pt-0.5 pl-[5px]">
            <div className="grid grid-cols-[43px_202px] items-center gap-y-[3px] pt-1.5">
              <label htmlFor="sync">Синхро:</label>
              <Combo id="sync" value="4.  Датчик синхронизации" className="h-[21px]" />
              <label htmlFor="signal">Сигнал:</label>
              <Combo id="signal" value="2.  Датчик Полож Коленчатого Вала" className="h-[21px]" />
            </div>
            <div className="ml-[7px] grid h-12 w-[92px] grid-cols-[28px_42px] content-between border-l border-[#c0c0c0] pl-[14px]">
              <label htmlFor="uoz" className="self-center">УОЗ</label>
              <Spin id="uoz" value="10" className="h-5" />
              <output className="pb-0.5">163</output>
            </div>
            <div className="w-[69px] border-l border-[#c0c0c0] pl-1 leading-4">
              <p className="text-[#ff0000]">M1=0.00</p>
              <p className="text-[#0000ff]">M2=7.00</p>
              <p className="text-[#800080]">∆M1=7.00</p>
            </div>
            <div className="flex border-l border-[#c0c0c0] pl-1">
              <button className="flex h-12 w-24 items-center gap-4 rounded-[3px] border-2 border-[#1c5080] bg-linear-to-b from-white to-[#e4e4dc] pl-2 text-xs font-bold outline-1 -outline-offset-4 outline-black outline-dotted">
                <svg viewBox="0 0 12 20" className="h-5 w-3"><path d="M1 0v20l10-10z" fill="#00f000" stroke="#60a060" /></svg>
                Анализ
              </button>
            </div>
          </div>
        </div>
      </main>

      <footer className="mt-auto flex h-[19px] gap-0.5 pt-px leading-4 whitespace-nowrap">
        <p className="w-[190px] border-t border-l border-[#a0a0a0] pl-1">USB Осциллограф не подключен</p>
        <p className="flex-1 border-t border-l border-[#a0a0a0]" />
        <p className="w-12 border-t border-l border-[#a0a0a0] pl-0.5">1.5</p>
      </footer>
      <Taskbar />
    </div>
  );
}
